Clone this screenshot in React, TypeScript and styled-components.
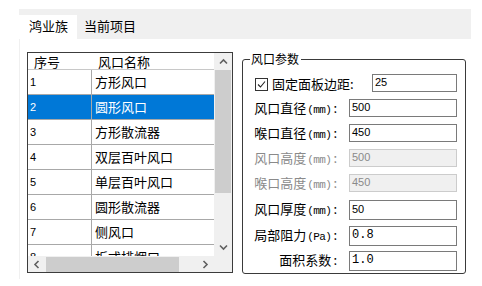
import React from 'react';
import styled, { createGlobalStyle } from 'styled-components';

const GlobalStyle = createGlobalStyle`
  body {
    margin: 0;
    background: #ffffff;
    font-family: "Noto Sans CJK SC", "Noto Sans", sans-serif;
  }
`;

const Page = styled.div`
  width: 482px;
  height: 286px;
  padding: 9px 0 0 19px;
  box-sizing: border-box;
`;

const TabStrip = styled.div`
  width: 452px;
  height: 30px;
  background: #f0f0f0;
  display: flex;
  align-items: flex-end;
`;

const Tab = styled.div<{ $active?: boolean }>`
  height: 24px;
  padding: 0 ${(p) => (p.$active ? '9px' : '6px')} 0 ${(p) => (p.$active ? '10px' : '7px')};
  background: ${(p) => (p.$active ? '#ffffff' : 'transparent')};
  font-size: 13px;
  line-height: 22px;
  color: #000;
  box-sizing: border-box;
`;

const TabBody = styled.div`
  width: 452px;
  height: 240px;
  border-left: 1px solid #f0f0f0;
  box-sizing: border-box;
  padding: 13px 0 0 7px;
  display: flex;
  gap: 9px;
  align-items: flex-start;
`;

/* ---------- list ---------- */

const ListBox = styled.div`
  width: 206px;
  height: 221px;
  border: 1px solid #3c3c3c;
  box-sizing: border-box;
  display: grid;
  grid-template-columns: 1fr 18px;
  grid-template-rows: 1fr 16px;
  background: #fff;
`;

const ListView = styled.div`
  overflow: hidden;
  position: relative;
`;

const HeaderRow = styled.div`
  display: flex;
  height: 17px;
  border-bottom: 1px solid #c8c8c8;
  box-sizing: border-box;
  font-size: 13px;
  line-height: 17px;
`;

const HeaderCell = styled.div<{ $w?: number }>`
  width: ${(p) => (p.$w ? `${p.$w}px` : 'auto')};
  flex: ${(p) => (p.$w ? 'none' : '1')};
  padding-left: 6px;
  box-sizing: border-box;
  position: relative;
  & + &::before {
    content: '';
    position: absolute;
    left: 0;
    top: 3px;
    bottom: 2px;
    border-left: 1px solid #dcdcdc;
  }
`;

const Row = styled.div<{ $sel?: boolean }>`
  display: flex;
  height: 25px;
  border-bottom: 1px solid #a8a8a8;
  box-sizing: border-box;
  background: ${(p) => (p.$sel ? '#0078d7' : '#ffffff')};
  color: ${(p) => (p.$sel ? '#ffffff' : '#000000')};
`;

const NumCell = styled.div`
  width: 64px;
  flex: none;
  padding-left: 2px;
  font-family: "Liberation Sans", "DejaVu Sans", sans-serif;
  font-size: 11px;
  line-height: 24px;
  border-right: 1px solid #a8a8a8;
  box-sizing: border-box;
`;

const NameCell = styled.div`
  flex: 1;
  padding-left: 3px;
  font-size: 13px;
  line-height: 23px;
`;

const VScroll = styled.div`
  background: #f0f0f0;
  display: flex;
  flex-direction: column;
  align-items: center;
`;

const ArrowBox = styled.div<{ $h?: number; $w?: number }>`
  height: ${(p) => p.$h ?? 17}px;
  width: ${(p) => p.$w ?? 17}px;
  flex: none;
  display: flex;
  align-items: center;
  justify-content: center;
`;

const VThumb = styled.div`
  width: 16px;
  height: 123px;
  background: #cdcdcd;
`;

const Spacer = styled.div`
  flex: 1;
`;

const HScroll = styled.div`
  background: #f0f0f0;
  display: flex;
  align-items: center;
`;

const HThumb = styled.div`
  width: 133px;
  height: 15px;
  background: #cdcdcd;
  margin-left: 1px;
`;

const Corner = styled.div`
  background: #f0f0f0;
`;

const Chevron: React.FC<{ dir: 'up' | 'down' | 'left' | 'right' }> = ({ dir }) => {
  const rot = { up: 0, right: 90, down: 180, left: 270 }[dir];
  return (
    <svg width="9" height="9" viewBox="0 0 9 9" style={{ transform: `rotate(${rot}deg)` }}>
      <path d="M1 6.5 L4.5 3 L8 6.5" fill="none" stroke="#606060" strokeWidth="1.6" />
    </svg>
  );
};

/* ---------- group box ---------- */

const Group = styled.fieldset`
  margin: 0;
  width: 224px;
  height: 222px;
  box-sizing: border-box;
  border: 1px solid #3a3a3a;
  border-radius: 3px;
  padding: 8px 0 0 12px;
`;

const Legend = styled.legend`
  font-size: 12px;
  line-height: 14px;
  padding: 0 2px 0 1px;
  margin-left: -5px;
  color: #000;
`;

const Fields = styled.div`
  display: flex;
  flex-direction: column;
`;

const FieldRow = styled.div<{ $h: number }>`
  height: ${(p) => p.$h}px;
  display: flex;
  align-items: flex-start;
`;

const Label = styled.div<{ $disabled?: boolean }>`
  width: 90px;
  flex: none;
  text-align: right;
  font-size: 13px;
  line-height: 18px;
  white-space: nowrap;
  color: ${(p) => (p.$disabled ? '#8a8a8a' : '#000')};
  margin-right: 7px;
  margin-left: -3px;
`;

const Unit = styled.span`
  font-family: "Liberation Mono", "DejaVu Sans Mono", monospace;
  font-size: 11px;
  letter-spacing: -0.6px;
  margin-left: 1px;
`;

const Colon = styled.span`
  margin-left: 2px;
  margin-right: 5px;
`;

const CheckLabel = styled.label`
  display: flex;
  align-items: center;
  width: 117px;
  flex: none;
  font-size: 13px;
  line-height: 18px;
  gap: 4px;
  margin-top: 1px;
`;

const CheckBox = styled.span`
  width: 11px;
  height: 11px;
  border: 1px solid #333;
  display: inline-flex;
  align-items: center;
  justify-content: center;
  background: #fff;
`;

const Field = styled.div<{ $w: number; $h: number; $disabled?: boolean; $mono?: boolean }>`
  width: ${(p) => p.$w}px;
  height: ${(p) => p.$h}px;
  box-sizing: border-box;
  border: 1px solid ${(p) => (p.$disabled ? '#cccccc' : '#7a7a7a')};
  background: ${(p) => (p.$disabled ? '#f0f0f0' : '#ffffff')};
  color: ${(p) => (p.$disabled ? '#8a8a8a' : '#000')};
  font-family: ${(p) =>
    p.$mono ? '"Liberation Mono", "DejaVu Sans Mono", monospace' : '"Liberation Sans", Arial, sans-serif'};
  font-size: ${(p) => (p.$mono ? '12px' : '11px')};
  line-height: ${(p) => p.$h - 4}px;
  padding-left: 2px;
`;

const rows = [
  '方形风口',
  '圆形风口',
  '方形散流器',
  '双层百叶风口',
  '单层百叶风口',
  '圆形散流器',
  '侧风口',
  '板式排烟口',
];

const params = [
  { label: '风口直径', unit: '(mm)', value: '500', h: 25, fh: 18 },
  { label: '喉口直径', unit: '(mm)', value: '450', h: 25, fh: 18 },
  { label: '风口高度', unit: '(mm)', value: '500', h: 25, fh: 18, disabled: true },
  { label: '喉口高度', unit: '(mm)', value: '450', h: 26, fh: 18, disabled: true },
  { label: '风口厚度', unit: '(mm)', value: '50', h: 26, fh: 20 },
  { label: '局部阻力', unit: '(Pa)', value: '0.8', h: 25, fh: 20, mono: true },
  { label: '面积系数', unit: '', value: '1.0', h: 21, fh: 20, mono: true },
];

const App: React.FC = () => (
  <>
    <GlobalStyle />
    <Page>
      <TabStrip>
        <Tab $active>鸿业族</Tab>
        <Tab>当前项目</Tab>
      </TabStrip>
      <TabBody>
        <ListBox>
          <ListView>
            <HeaderRow>
              <HeaderCell $w={64}>序号</HeaderCell>
              <HeaderCell>风口名称</HeaderCell>
            </HeaderRow>
            {rows.map((name, i) => (
              <Row key={name} $sel={i === 1}>
                <NumCell>{i + 1}</NumCell>
                <NameCell>{name}</NameCell>
              </Row>
            ))}
          </ListView>
          <VScroll>
            <ArrowBox>
              <Chevron dir="up" />
            </ArrowBox>
            <VThumb />
            <Spacer />
            <ArrowBox>
              <Chevron dir="down" />
            </ArrowBox>
          </VScroll>
          <HScroll>
            <ArrowBox $w={17} $h={16}>
              <Chevron dir="left" />
            </ArrowBox>
            <HThumb />
            <Spacer />
            <ArrowBox $w={17} $h={16}>
              <Chevron dir="right" />
            </ArrowBox>
          </HScroll>
          <Corner />
        </ListBox>

        <Group>
          <Legend>风口参数</Legend>
          <Fields>
            <FieldRow $h={25}>
              <CheckLabel>
                <CheckBox>
                  <svg width="9" height="9" viewBox="0 0 9 9">
                    <path d="M1 4.5 L3.5 7 L8 1.5" fill="none" stroke="#222" strokeWidth="1.1" />
                  </svg>
                </CheckBox>
                固定面板边距:
              </CheckLabel>
              <Field $w={85} $h={18}>25</Field>
            </FieldRow>
            {params.map((p) => (
              <FieldRow key={p.label} $h={p.h}>
                <Label $disabled={p.disabled}>
                  {p.label}
                  {p.unit && <Unit>{p.unit}</Unit>}
                  <Colon>:</Colon>
                </Label>
                <Field $w={108} $h={p.fh} $disabled={p.disabled} $mono={p.mono}>
                  {p.value}
                </Field>
              </FieldRow>
            ))}
          </Fields>
        </Group>
      </TabBody>
    </Page>
  </>
);

export default App;
